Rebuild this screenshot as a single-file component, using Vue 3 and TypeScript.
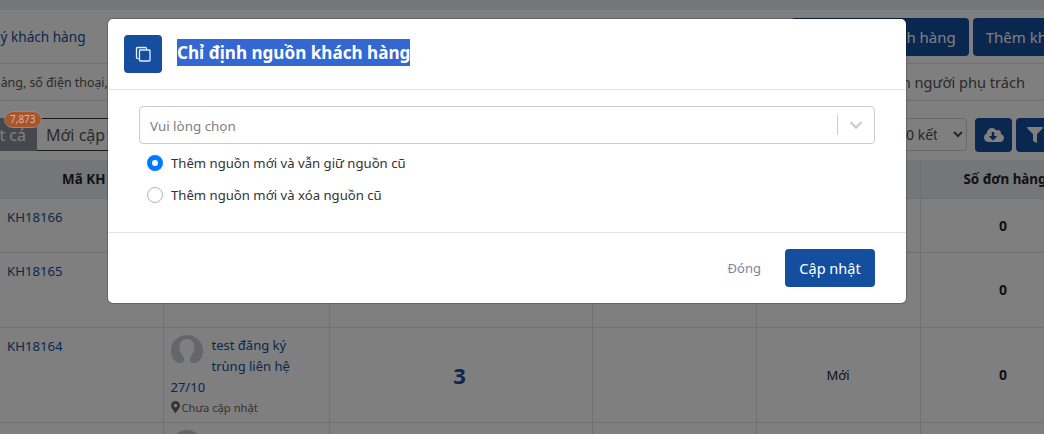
<template>
  <div class="page">
    <div class="top-strip"></div>

    <div class="toolbar">
      <span class="crumb">lý khách hàng</span>
      <button class="btn-dark import-btn">Nhập khách hàng</button>
      <button class="btn-dark">Thêm khách hàng</button>
    </div>

    <div class="search-row">
      <span class="search-text">hàng, số điện thoại,</span>
      <span class="owner-text">Chọn người phụ trách</span>
    </div>

    <div class="tabs-row">
      <div class="tab active">
        <span class="tab-label">Tất cả</span>
        <span class="badge">7,873</span>
      </div>
      <div class="tab-rest">
        <span class="tab">Mới cập nhật</span>
      </div>
      <select class="page-size">
        <option>10 kết quả</option>
      </select>
      <button class="btn-dark icon-btn">
        <svg width="20" height="16" viewBox="0 0 640 512"><path fill="#fff" d="M537.6 226.6c4.100-10.700 6.400-22.400 6.400-34.600 0-53-43-96-96-96-19.700 0-38.100 6-53.300 16.200C367 64.200 315.300 32 256 32c-88.400 0-160 71.600-160 160 0 2.700.1 5.400.2 8.100C40.200 219.800 0 273.200 0 336c0 79.500 64.500 144 144 144h368c70.700 0 128-57.300 128-128 0-61.900-44-113.600-102.400-125.400zm-132.900 88.700L299.300 420.700c-6.200 6.200-16.400 6.200-22.600 0L171.300 315.300c-10.100-10.100-2.900-27.300 11.300-27.300H248V176c0-8.800 7.200-16 16-16h48c8.800 0 16 7.200 16 16v112h65.400c14.200 0 21.400 17.200 11.300 27.300z"/></svg>
      </button>
      <button class="btn-dark icon-btn">
        <svg width="16" height="16" viewBox="0 0 512 512"><path fill="#fff" d="M487.976 0H24.028C2.710 0-8.047 25.866 7.058 40.971L192 225.941V432c0 7.831 3.821 15.170 10.237 19.662l80 55.980C298.020 518.690 320 507.493 320 487.980V225.941l184.947-184.970C520.021 25.896 509.338 0 487.976 0z"/></svg>
      </button>
    </div>

    <table class="grid">
      <colgroup>
        <col v-for="w in colWidths" :key="w.id" :style="{ width: w.px + 'px' }" />
      </colgroup>
      <thead>
        <tr>
          <th class="code-head">Mã KH</th>
          <th>Khách hàng</th>
          <th>Số nguồn</th>
          <th>Người phụ trách</th>
          <th>Trạng thái</th>
          <th class="orders-head">Số đơn hàng</th>
        </tr>
      </thead>
      <tbody>
        <tr v-for="row in rows" :key="row.code" :style="{ height: row.height + 'px' }">
          <td class="code">{{ row.code }}</td>
          <td class="customer">
            <template v-if="row.name">
              <svg class="avatar" width="32" height="32" viewBox="0 0 32 32">
                <path fill="#c6ccd8" d="M16 0C7 0 0 7 0 15.500 0 21 2 25 6 27.500c2 .8 5 .8 6.500-1 1-1.500.8-3.500-.3-5C9.500 18 8.500 15 8.500 12 8.500 7.500 11.500 4 16 4s7.500 3.500 7.500 8c0 3-1 6-3.700 9.500-1.100 1.500-1.300 3.500-.3 5 1.500 1.800 4.500 1.800 6.500 1 4-2.500 6-6.500 6-12C32 7 25 0 16 0z" />
              </svg>
              <span class="name">{{ row.name }}</span>
            </template>
            <div v-if="row.showPlace" class="place">
              <svg width="9" height="12" viewBox="0 0 384 512"><path fill="#666" d="M172.300 501.700C27 291 0 256 0 192 0 86 86 0 192 0s192 86 192 192c0 64-27 99-172.300 309.700-9.500 13.700-29.900 13.700-39.400 0zM192 272c44.200 0 80-35.800 80-80s-35.800-80-80-80-80 35.800-80 80 35.800 80 80 80z"/></svg>
              Chưa cập nhật
            </div>
          </td>
          <td class="count">{{ row.count }}</td>
          <td></td>
          <td class="status">{{ row.status }}</td>
          <td class="orders">{{ row.orders }}</td>
        </tr>
      </tbody>
    </table>

    <div class="overlay"></div>

    <div class="modal">
      <div class="modal-head">
        <span class="modal-icon">
          <svg width="16" height="16" viewBox="0 0 16 16" fill="none" stroke="#e6ecf6" stroke-width="1.300">
            <path d="M3.500 12.500H2.500a1 1 0 0 1-1-1V2.500a1 1 0 0 1 1-1h8a1 1 0 0 1 1 1v1" />
            <rect x="4.500" y="4" width="10.500" height="11" rx=".8" />
          </svg>
        </span>
        <h3 class="modal-title"><span>Chỉ định nguồn khách hàng</span></h3>
      </div>
      <div class="modal-body">
        <div class="picker">
          <span class="picker-text">Vui lòng chọn</span>
          <span class="picker-sep"></span>
          <svg class="picker-arrow" width="14" height="10" viewBox="0 0 14 10" fill="none" stroke="#cccccc" stroke-width="2.400"><path d="M1.500 2l5.500 5.500L12.500 2" /></svg>
        </div>
        <div class="radio-group">
          <label v-for="opt in options" :key="opt.id" class="radio-line">
            <input v-model="mode" type="radio" :value="opt.id" />
            <span>{{ opt.label }}</span>
          </label>
        </div>
      </div>
      <div class="modal-foot">
        <button class="btn-close">Đóng</button>
        <button class="btn-save">Cập nhật</button>
      </div>
    </div>
  </div>
</template>

<script setup lang="ts">
import { ref } from 'vue'

const colWidths = [
  { id: 'code', px: 163 },
  { id: 'customer', px: 166 },
  { id: 'count', px: 263 },
  { id: 'owner', px: 164 },
  { id: 'status', px: 164 },
  { id: 'orders', px: 166 },
]

const rows = [
  { code: 'KH18166', height: 54, name: '', showPlace: false, count: '', status: '', orders: 0 },
  { code: 'KH18165', height: 75, name: '', showPlace: true, count: '', status: '', orders: 0 },
  { code: 'KH18164', height: 95, name: 'test đăng ký trùng liên hệ 27/10', showPlace: true, count: '3', status: 'Mới', orders: 0 },
  { code: 'KH18163', height: 95, name: 'test', showPlace: false, count: '', status: '', orders: 0 },
]

const options = [
  { id: 'keep', label: 'Thêm nguồn mới và vẫn giữ nguồn cũ' },
  { id: 'replace', label: 'Thêm nguồn mới và xóa nguồn cũ' },
]

const mode = ref('keep')
</script>

<style>
html,
body {
  margin: 0;
  height: 434px;
  overflow: hidden;
  background: #fff;
}
</style>

<style scoped>
.page {
  position: relative;
  width: 1125px;
  height: 434px;
  overflow: hidden;
  font-family: 'Noto Sans', sans-serif;
  font-size: 14px;
  color: #212529;
}

.top-strip {
  height: 10px;
  background: #ebedf0;
}

.toolbar {
  display: flex;
  align-items: center;
  gap: 4px;
  height: 54px;
  padding-bottom: 8px;
  padding-top: 8px;
  box-sizing: border-box;
  border-bottom: 1px solid #dee2e6;
}

.crumb {
  flex: 1;
  margin-left: -3px;
  color: #134f9e;
  font-size: 13.6px;
}

.btn-dark {
  background: #134f9e;
  color: #fff;
  border: 0;
  border-radius: 4px;
  font-family: inherit;
  font-size: 15px;
  height: 38px;
  padding: 0 13px;
  white-space: nowrap;
}

.import-btn {
  width: 178px;
  text-align: right;
}

.search-row {
  display: flex;
  justify-content: space-between;
  align-items: center;
  height: 37px;
  box-sizing: border-box;
  border-bottom: 1px solid #dee2e6;
  color: #555;
  font-size: 14.6px;
  padding-right: 100px;
}

.search-text {
  margin-left: -7px;
  font-size: 12.4px;
}

.tabs-row {
  display: flex;
  align-items: flex-start;
  height: 59px;
  padding-top: 17px;
  box-sizing: border-box;
}

.tab {
  font-size: 16px;
}

.tab.active {
  position: relative;
  display: flex;
  align-items: center;
  justify-content: flex-end;
  width: 37px;
  height: 33px;
  background: #8a929e;
  color: #fff;
}

.tab-label {
  white-space: nowrap;
  padding-right: 11px;
}

.badge {
  position: absolute;
  z-index: 1;
  left: 5px;
  top: -6px;
  padding: 0 5px;
  height: 15px;
  line-height: 15px;
  border-radius: 8px;
  background: #a9562c;
  color: #d6b6a4;
  font-size: 10px;
  outline: 1px solid #8d8d8d;
}

.tab-rest {
  display: flex;
  align-items: center;
  width: 860px;
  height: 33px;
  box-sizing: border-box;
  border-top: 1px solid #333;
  border-bottom: 1px solid #333;
  padding-left: 9px;
  color: #555;
  white-space: nowrap;
  flex-shrink: 0;
}

.page-size {
  width: 74px;
  height: 33px;
  box-sizing: border-box;
  margin-right: 8px;
  margin-left: -4px;
  padding-right: 13px;
  border: 1px solid #ced4da;
  border-radius: 4px;
  background: #fff;
  font-family: inherit;
  font-size: 14px;
  color: #495057;
  flex-shrink: 0;
}

.icon-btn {
  display: flex;
  align-items: center;
  justify-content: center;
  width: 37px;
  height: 34px;
  padding: 0;
  margin-right: 4px;
  flex-shrink: 0;
}

.grid {
  table-layout: fixed;
  width: 1086px;
  margin-top: 0;
  border-collapse: collapse;
}

.grid th {
  height: 38px;
  padding: 0;
  background: #ebedf0;
  border: 1px solid #dee2e6;
  border-width: 0 1px 1px;
  font-size: 13.4px;
  font-weight: 700;
  text-align: center;
  box-sizing: border-box;
}

.grid th:first-child,
.grid td:first-child {
  border-left: 0;
}

.grid .code-head {
  padding-left: 5px;
}

.grid .orders-head {
  padding-left: 4px;
}

.grid td {
  padding: 8px 7px;
  border: 1px solid #dee2e6;
  vertical-align: top;
  box-sizing: border-box;
}

.code {
  color: #134f9e;
  font-size: 13.2px;
  line-height: 21px;
}

.grid .customer {
  padding: 7px 7px 3px;
  font-size: 13px;
  line-height: 21px;
}

.avatar {
  float: left;
  margin: 0 9px 0 0;
}

.name {
  color: #134f9e;
}

.place {
  clear: both;
  display: flex;
  align-items: center;
  gap: 2px;
  font-size: 11.2px;
  color: #666;
  line-height: 19px;
}

.grid .count {
  padding: 1px 9px 0 7px;
  vertical-align: middle;
  text-align: center;
  color: #134f9e;
  font-size: 22px;
  font-weight: 700;
}

.grid .status {
  padding: 1px 7px 0;
  vertical-align: middle;
  text-align: center;
  font-size: 13px;
}

.grid .orders {
  padding: 0 7px;
  vertical-align: middle;
  text-align: center;
  font-weight: 700;
  font-size: 14px;
}

.overlay {
  position: absolute;
  inset: 0;
  background: rgba(0, 0, 0, 0.5);
}

.modal {
  position: absolute;
  left: 108px;
  top: 19px;
  width: 798px;
  height: 284px;
  display: flex;
  flex-direction: column;
  background: #fff;
  border-radius: 5px;
  box-shadow: 0 0 0 1px rgba(0, 0, 0, 0.2);
}

.modal-head {
  display: flex;
  align-items: center;
  gap: 15px;
  height: 71px;
  padding: 0 16px;
  box-sizing: border-box;
  border-bottom: 1px solid #e4e4e4;
}

.modal-icon {
  display: flex;
  align-items: center;
  justify-content: center;
  width: 38px;
  height: 38px;
  border-radius: 4px;
  background: #134f9e;
}

.modal-title {
  margin: 0 0 3px;
  font-size: 17.1px;
  font-weight: 700;
  line-height: 27px;
}

.modal-title span {
  display: inline-block;
  background: #3367d1;
  color: #fff;
}

.modal-body {
  flex: 1;
  padding: 16px 31px 0;
}

.picker {
  display: flex;
  align-items: center;
  height: 38px;
  box-sizing: border-box;
  border: 1px solid #cccccc;
  border-radius: 4px;
  padding-left: 10px;
}

.picker-text {
  flex: 1;
  padding-top: 2px;
  color: #808080;
  font-size: 13.4px;
}

.picker-sep {
  width: 1px;
  height: 20px;
  background: #cccccc;
}

.picker-arrow {
  margin: 0 11px;
}

.radio-group {
  margin-top: 3px;
}

.radio-line {
  display: flex;
  align-items: center;
  gap: 8px;
  height: 32px;
  padding-left: 8px;
  font-size: 13.15px;
  color: #333;
}

.radio-line input {
  appearance: none;
  box-sizing: border-box;
  margin: 0;
  width: 16px;
  height: 16px;
  border: 1px solid #adb5bd;
  border-radius: 50%;
  background: #fff;
}

.radio-line input:checked {
  border: 5px solid #007bff;
}

.modal-foot {
  display: flex;
  justify-content: flex-end;
  align-items: center;
  gap: 24px;
  height: 71px;
  padding-right: 31px;
  box-sizing: border-box;
  border-top: 1px solid #e4e4e4;
}

.btn-close {
  padding: 0;
  border: 0;
  background: none;
  color: #7e8299;
  font-family: inherit;
  font-size: 13px;
}

.btn-save {
  width: 90px;
  height: 38px;
  border: 0;
  border-radius: 4px;
  background: #134f9e;
  color: #fff;
  font-family: inherit;
  font-size: 14.5px;
}
</style>
